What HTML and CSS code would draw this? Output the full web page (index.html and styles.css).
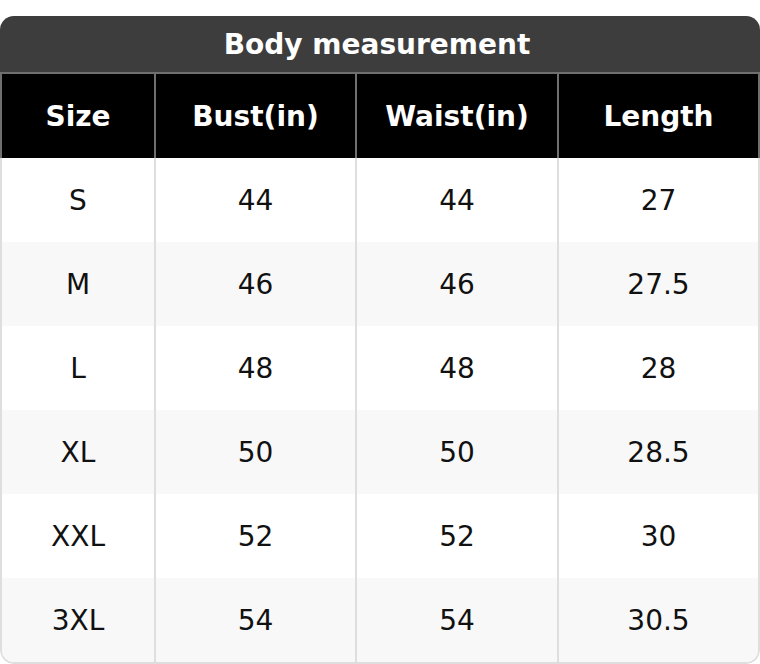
FILE: index.html
```html
<!DOCTYPE html>
<html>
<head>
<meta charset="utf-8">
<link rel="stylesheet" href="styles.css">
</head>
<body>
<div class="card">
  <div class="title">Body measurement</div>
  <div class="row head">
    <div class="cell">Size</div>
    <div class="cell">Bust(in)</div>
    <div class="cell">Waist(in)</div>
    <div class="cell">Length</div>
  </div>
  <div class="body">
    <div class="row"><div class="cell">S</div><div class="cell">44</div><div class="cell">44</div><div class="cell">27</div></div>
    <div class="row alt"><div class="cell">M</div><div class="cell">46</div><div class="cell">46</div><div class="cell">27.5</div></div>
    <div class="row"><div class="cell">L</div><div class="cell">48</div><div class="cell">48</div><div class="cell">28</div></div>
    <div class="row alt"><div class="cell">XL</div><div class="cell">50</div><div class="cell">50</div><div class="cell">28.5</div></div>
    <div class="row"><div class="cell">XXL</div><div class="cell">52</div><div class="cell">52</div><div class="cell">30</div></div>
    <div class="row alt"><div class="cell">3XL</div><div class="cell">54</div><div class="cell">54</div><div class="cell">30.5</div></div>
  </div>
</div>
</body>
</html>
```

FILE: styles.css
```css
html, body {
  margin: 0;
  padding: 0;
  background: #ffffff;
}
body {
  font-family: "DejaVu Sans", sans-serif;
  padding-top: 16px;
}
.card {
  width: 760px;
  border-radius: 14px;
  overflow: hidden;
}
.title {
  height: 56px;
  background: #3d3d3d;
  color: #ffffff;
  font-weight: bold;
  font-size: 28px;
  display: flex;
  align-items: center;
  justify-content: center;
  padding-right: 6px;
}
.row {
  display: grid;
  grid-template-columns: 154px 201px 202px 203px;
}
.cell {
  height: 84px;
  display: flex;
  align-items: center;
  justify-content: center;
  font-size: 28px;
  color: #111111;
  box-sizing: border-box;
}
.head {
  border-top: 2px solid #6f6f6f;
  background: #000000;
}
.head .cell {
  color: #ffffff;
  font-weight: bold;
  border-left: 2px solid #6f6f6f;
}
.head .cell:last-child {
  border-right: 2px solid #6f6f6f;
}
.body {
  border: 2px solid #dedede;
  border-top: none;
  border-radius: 0 0 14px 14px;
  overflow: hidden;
}
.body .row {
  grid-template-columns: 152px 201px 202px 201px;
  background: #ffffff;
}
.body .row.alt {
  background: #f8f8f8;
}
.body .cell + .cell {
  border-left: 2px solid #dedede;
}
```
